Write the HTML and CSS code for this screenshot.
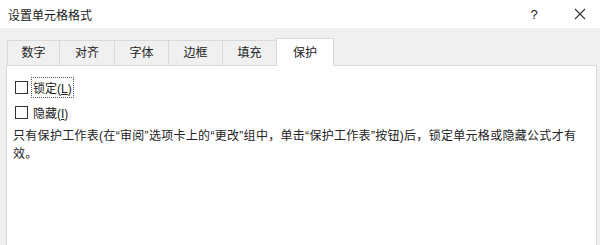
FILE: index.html
```html
<!DOCTYPE html>
<html>
<head>
    <title>设置单元格格式</title>
    <link rel="stylesheet" href="styles.css">
</head>
<body>
    <div class="dialog">
        <div class="titlebar">
            <span class="title">设置单元格格式</span>
            <span class="help">?</span>
            <span class="close">
                <svg width="12" height="12" viewBox="0 0 12 12">
                    <path d="M1 1 L11 11 M11 1 L1 11" stroke="#333" stroke-width="1.1" fill="none"/>
                </svg>
            </span>
        </div>
        <div class="body">
            <div class="tabs">
                <div class="tab">数字</div>
                <div class="tab">对齐</div>
                <div class="tab">字体</div>
                <div class="tab">边框</div>
                <div class="tab">填充</div>
                <div class="tab active">保护</div>
            </div>
            <div class="panel">
                <label class="check">
                    <span class="box"></span>
                    <span class="label focus">锁定(<u>L</u>)</span>
                </label>
                <label class="check">
                    <span class="box"></span>
                    <span class="label">隐藏(<u>I</u>)</span>
                </label>
                <p class="note">只有保护工作表(在“审阅”选项卡上的“更改”组中，单击“保护工作表”按钮)后，锁定单元格或隐藏公式才有效。</p>
            </div>
        </div>
    </div>
</body>
</html>
```

FILE: styles.css
```css
body {
    margin: 0;
    font-family: "Liberation Sans", "Noto Sans CJK SC", sans-serif;
    font-size: 12px;
    color: #222;
}
.dialog {
    width: 600px;
    height: 245px;
    display: flex;
    flex-direction: column;
    background: #f0f0f0;
}
.titlebar {
    height: 28px;
    background: #fff;
    display: flex;
    align-items: center;
    padding-left: 8px;
}
.title {
    font-size: 12px;
    flex: 1;
    color: #1a1a1a;
}
.help {
    width: 16px;
    text-align: center;
    font-size: 13px;
    margin-right: 32px;
}
.close {
    width: 14px;
    margin-right: 12px;
    display: flex;
}
.body {
    flex: 1;
    display: flex;
    flex-direction: column;
    padding: 9px 3px 0 6px;
}
.tabs {
    display: flex;
    padding-left: 1px;
    align-items: flex-end;
    height: 28px;
}
.tab {
    height: 25px;
    line-height: 25px;
    width: 54px;
    text-align: center;
    border: 1px solid #d9d9d9;
    border-bottom: none;
    border-right: none;
    box-sizing: border-box;
}
.tab:first-child {
    width: 52px;
}
.tab:nth-child(2) {
    width: 55px;
}
.tab.active {
    height: 28px;
    line-height: 28px;
    width: 58px;
    background: #fff;
    border-right: 1px solid #d9d9d9;
    margin-bottom: -1px;
    position: relative;
}
.panel {
    flex: 1;
    background: #fff;
    border: 1px solid #d9d9d9;
    border-bottom: none;
    padding: 12px 0 0 8px;
}
.check {
    display: flex;
    align-items: center;
    height: 18px;
    margin-bottom: 7px;
}
.box {
    width: 11px;
    height: 11px;
    border: 1px solid #333;
    margin-right: 3px;
}
.label {
    padding: 1px 1px;
    border: 1px dotted transparent;
}
.label.focus {
    border-color: #555;
}
.note {
    width: 572px;
    margin: -1px 0 0 -2px;
    line-height: 18px;
    letter-spacing: 0.3px;
}
```
